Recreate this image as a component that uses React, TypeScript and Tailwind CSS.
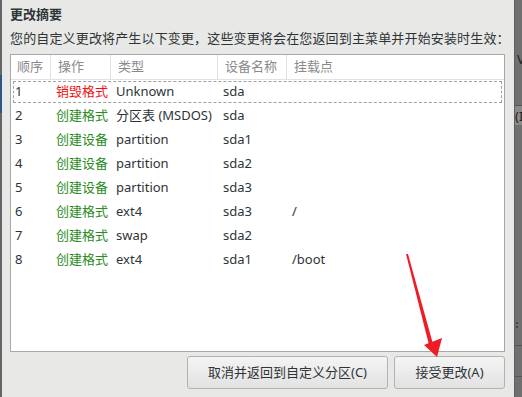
import * as React from "react";

type Row = {
  n: string;
  action: string;
  destroy?: boolean;
  kind: string;
  dev: string;
  mount: string;
};

const rows: Row[] = [
  { n: "1", action: "销毁格式", destroy: true, kind: "Unknown", dev: "sda", mount: "" },
  { n: "2", action: "创建格式", kind: "分区表 (MSDOS)", dev: "sda", mount: "" },
  { n: "3", action: "创建设备", kind: "partition", dev: "sda1", mount: "" },
  { n: "4", action: "创建设备", kind: "partition", dev: "sda2", mount: "" },
  { n: "5", action: "创建设备", kind: "partition", dev: "sda3", mount: "" },
  { n: "6", action: "创建格式", kind: "ext4", dev: "sda3", mount: "/" },
  { n: "7", action: "创建格式", kind: "swap", dev: "sda2", mount: "" },
  { n: "8", action: "创建格式", kind: "ext4", dev: "sda1", mount: "/boot" },
];

const cols = ["w-[40px]", "w-[60px]", "w-[107px]", "w-[69px]", "flex-1"];

const RowCells: React.FC<{ row: Row }> = ({ row }) => (
  <>
    <div className={`${cols[0]} pl-[1px]`}>{row.n}</div>
    <div className={`${cols[1]} pl-[2px] ${row.destroy ? "text-[#ee1111]" : "text-[#2a8a22]"}`}>
      {row.action}
    </div>
    <div className={`${cols[2]} pl-[2px]`}>{row.kind}</div>
    <div className={`${cols[3]} pl-[2px]`}>{row.dev}</div>
    <div className={`${cols[4]} pl-[2px]`}>{row.mount}</div>
  </>
);

export default function App() {
  return (
    <div
      className="relative flex w-[522px] h-[397px] overflow-hidden text-[13px] text-[#2e3436]"
      style={{ fontFamily: '"Noto Sans", "Noto Sans CJK SC", sans-serif' }}
    >
      {/* left background sliver */}
      <div className="flex flex-col w-[2px] shrink-0 bg-[#666]">
        <div className="h-[75px]" />
        <div className="h-[38px] bg-[#2b5785]" />
      </div>

      {/* dialog */}
      <div className="flex flex-col w-[512px] shrink-0 bg-[#e8e8e7] pl-[8px] pr-[9px]">
        <h2 className="pt-[5px] leading-[18px] font-bold">更改摘要</h2>
        <p className="mt-[6px] leading-[18px] whitespace-nowrap tracking-[0.15px]">
          您的自定义更改将产生以下变更，这些变更将会在您返回到主菜单并开始安装时生效：
        </p>

        <div className="mt-[7px] h-[298px] border border-[#a8a8a8] bg-white flex flex-col">
          <div className="flex h-[25px] border-b border-[#e2e2e2] text-[#8a8a8a] items-center">
            {["顺序", "操作", "类型", "设备名称", "挂载点"].map((h, i) => (
              <div
                key={h}
                className={`${cols[i]} h-full flex items-center ${i === 0 ? "pl-[6px]" : "pl-[7px]"} ${i < 4 ? "border-r border-[#e0e0e0]" : ""}`}
              >
                {h}
              </div>
            ))}
          </div>

          {rows.map((row, i) =>
            i === 0 ? (
              <div key={row.n} className="h-[24px] px-[2px] py-[1px]">
                <div className="flex h-full items-center border border-dashed border-[#a0a0a0]">
                  <RowCells row={row} />
                </div>
              </div>
            ) : (
              <div key={row.n} className="flex h-[24px] items-center px-[3px]">
                <RowCells row={row} />
              </div>
            )
          )}
        </div>

        <div className="mt-[4px] flex justify-end gap-[6px]">
          <button className="w-[201px] h-[33px] rounded-[3px] border border-[#b2b2b2] bg-gradient-to-b from-[#f4f4f4] to-[#e2e2e2] text-[#2e3436]">
            取消并返回到自定义分区(C)
          </button>
          <button className="w-[111px] h-[33px] rounded-[3px] border border-[#b2b2b2] bg-gradient-to-b from-[#f4f4f4] to-[#e2e2e2] text-[#2e3436]">
            接受更改(A)
          </button>
        </div>
      </div>

      {/* right background window sliver */}
      <div className="flex flex-col w-[8px] shrink-0 overflow-hidden bg-[#707070] border-l border-[#5e5e5e] text-[#222]">
        <div className="h-[105px] pt-[50px] pl-[2px] leading-[18px]">V</div>
        <div className="h-[20px] bg-[#8a8a8a] border-t border-[#555] leading-[20px] whitespace-nowrap">(I</div>
        <div className="h-[197px]" />
        <div className="h-[6px] pl-[1px] flex flex-col gap-[2px]">
          <div className="w-[2px] h-[2px] bg-[#444]" />
          <div className="w-[2px] h-[2px] bg-[#444]" />
        </div>
        <div className="h-[17px]" />
        <div className="border-t border-[#555] h-[31px]" />
        <div className="border-t border-[#555]" />
      </div>

      {/* red annotation arrow */}
      <svg className="absolute left-0 top-0" width="522" height="397" viewBox="0 0 522 397">
        <polygon points="406,254 408,254 433,344 429,345" fill="#ee1c25" />
        <polygon points="424,345 442,338 437,357" fill="#ee1c25" />
      </svg>
    </div>
  );
}
